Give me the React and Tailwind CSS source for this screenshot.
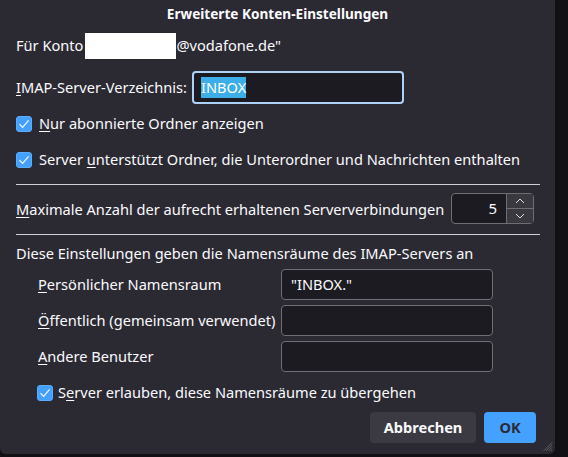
import React from "react";

const font = { fontFamily: '"Noto Sans", "Open Sans", sans-serif' };

function Check() {
  return (
    <span className="w-[16px] h-[16px] rounded-[3px] bg-[#45a1ff] border border-[#5aaeff] flex items-center justify-center shrink-0">
      <svg width="12" height="12" viewBox="0 0 12 12" fill="none">
        <path d="M1.5 6.2 L4.6 9.4 L10.6 2.4" stroke="#f4f8ff" strokeWidth="1.2" />
      </svg>
    </span>
  );
}

function Field({ value }) {
  return (
    <div className="w-[212px] h-[31px] rounded-[4px] border border-[#6f6e75] bg-[#1c1b22] flex items-center px-[9px] text-[#fbfbfe]">
      {value}
    </div>
  );
}

export default function App() {
  return (
    <div className="w-[568px] h-[457px] bg-[#111115] overflow-hidden" style={font}>
      <div className="w-[555px] h-[454px] bg-[#2b2a33] rounded-b-[6px] relative text-[#fbfbfe] text-[14.6px] flex flex-col px-[16px]">
        <div className="h-[28px] flex items-center justify-center font-bold text-[13.6px]">
          Erweiterte Konten-Einstellungen
        </div>

        <div className="mt-[5px] h-[26px] flex items-center">
          <span>Für Konto</span>
          <span className="inline-block w-[91px] h-[26px] bg-white ml-[2px]"></span>
          <span>@vodafone.de"</span>
        </div>

        <div className="mt-[12px] h-[33px] flex items-center">
          <span>
            <u className="underline-offset-2">I</u>MAP-Server-Verzeichnis:
          </span>
          <div className="ml-auto mr-[135px] w-[212px] h-[33px] rounded-[4px] border-2 border-[#aed2f7] bg-[#1c1b22] flex items-center px-[7px]">
            <span className="bg-[#3daee9] text-white leading-[21px]">INBOX</span>
          </div>
        </div>

        <div className="mt-[12px] h-[16px] flex items-center gap-[7px]">
          <Check />
          <span>
            <u className="underline-offset-2">N</u>ur abonnierte Ordner anzeigen
          </span>
        </div>

        <div className="mt-[20px] h-[16px] flex items-center gap-[7px]">
          <Check />
          <span>
            Server <u className="underline-offset-2">u</u>nterstützt Ordner, die Unterordner und Nachrichten enthalten
          </span>
        </div>

        <div className="mt-[16px] h-px w-[524px] bg-[#cfcfd8]"></div>

        <div className="mt-[8px] h-[31px] flex items-center">
          <span className="mt-[3px]">
            <u className="underline-offset-2">M</u>aximale Anzahl der aufrecht erhaltenen Serververbindungen
          </span>
          <div className="ml-auto mr-[5px] w-[83px] h-[31px] rounded-[4px] border border-[#6f6e75] bg-[#1c1b22] flex items-center">
            <span className="flex-1 text-right pr-[9px] text-[15px]">5</span>
            <div className="w-[27px] h-[29px] flex flex-col border-l border-[#6f6e75]">
              <div className="flex-1 bg-[#3a3940] border-b border-[#6f6e75] flex items-center justify-center">
                <svg width="10" height="6" viewBox="0 0 10 6" fill="none">
                  <path d="M1 5 L5 1 L9 5" stroke="#e0e0e6" strokeWidth="1" />
                </svg>
              </div>
              <div className="flex-1 bg-[#3a3940] flex items-center justify-center">
                <svg width="10" height="6" viewBox="0 0 10 6" fill="none">
                  <path d="M1 1 L5 5 L9 1" stroke="#e0e0e6" strokeWidth="1" />
                </svg>
              </div>
            </div>
          </div>
        </div>

        <div className="mt-[10px] h-px w-[524px] bg-[#cfcfd8]"></div>

        <div className="mt-[9px] h-[20px] flex items-center">
          Diese Einstellungen geben die Namensräume des IMAP-Servers an
        </div>

        <div className="mt-[5px] h-[31px] flex items-center pl-[22px]">
          <span>
            <u className="underline-offset-2">P</u>ersönlicher Namensraum
          </span>
          <div className="ml-auto mr-[46px]">
            <Field value={'"INBOX."'} />
          </div>
        </div>

        <div className="mt-[5px] h-[31px] flex items-center pl-[22px]">
          <span>
            <u className="underline-offset-2">Ö</u>ffentlich (gemeinsam verwendet)
          </span>
          <div className="ml-auto mr-[46px]">
            <Field value="" />
          </div>
        </div>

        <div className="mt-[5px] h-[31px] flex items-center pl-[22px]">
          <span>
            <u className="underline-offset-2">A</u>ndere Benutzer
          </span>
          <div className="ml-auto mr-[46px]">
            <Field value="" />
          </div>
        </div>

        <div className="mt-[13px] h-[16px] flex items-center gap-[5px] pl-[21px]">
          <Check />
          <span>
            S<u className="underline-offset-2">e</u>rver erlauben, diese Namensräume zu übergehen
          </span>
        </div>

        <div className="mt-[11px] h-[31px] flex justify-end gap-[8px] pr-[3px]">
          <button className="w-[106px] h-[31px] rounded-[4px] bg-[#3b3a42] text-[#fbfbfe] font-bold">
            Abbrechen
          </button>
          <button className="w-[52px] h-[31px] rounded-[4px] bg-[#45a1ff] text-[#2b2a33] font-bold">
            OK
          </button>
        </div>

        <svg className="absolute right-[2px] bottom-[2px]" width="10" height="10" viewBox="0 0 10 10">
          <path d="M9 3 L3 9 M9 5.5 L5.5 9 M9 8 L8 9 M9 0.5 L0.5 9" stroke="#6a6970" strokeWidth="0.8" />
        </svg>
      </div>
    </div>
  );
}
